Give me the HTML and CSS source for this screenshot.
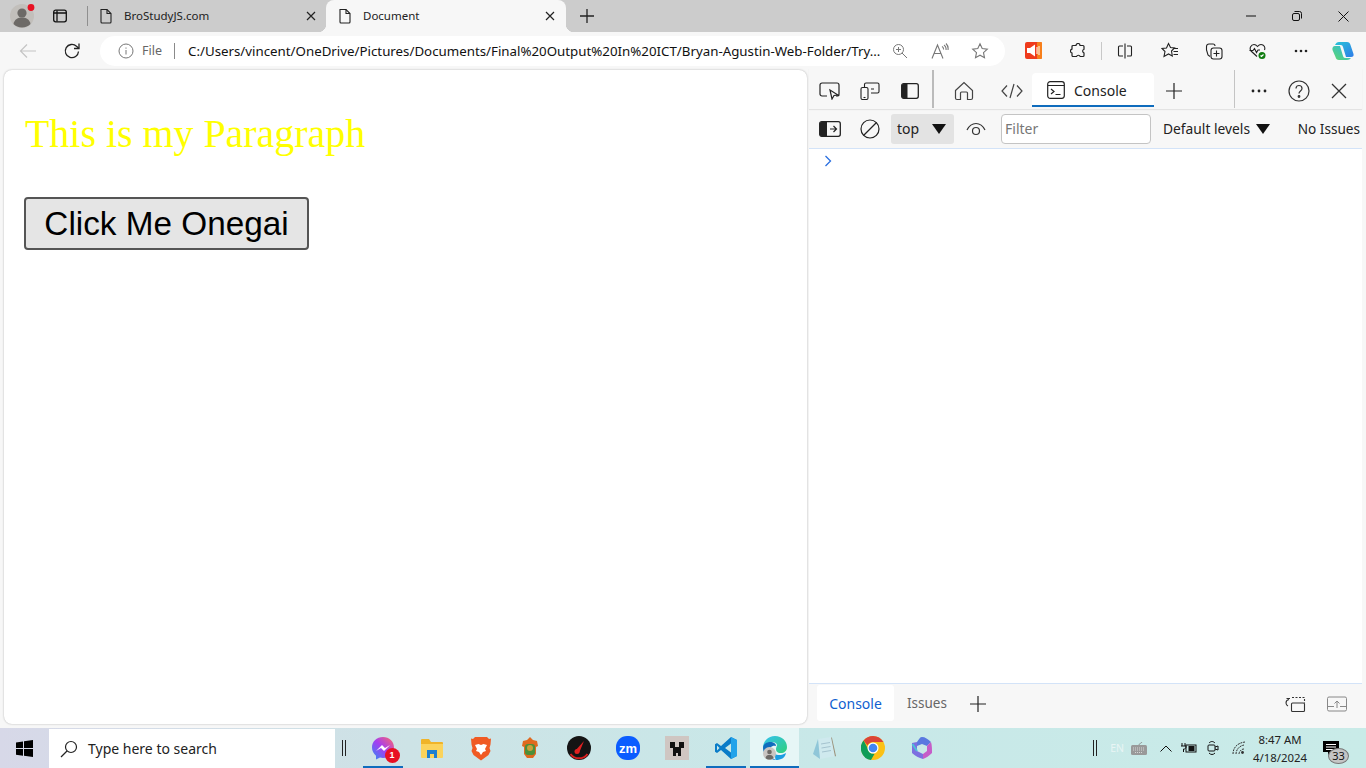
FILE: index.html
```html
<!DOCTYPE html>
<html lang="en">
<head>
    <meta charset="UTF-8">
    <title>Document</title>
    <link rel="stylesheet" href="styles.css">
</head>
<body>
    <!-- browser title bar -->
    <div class="titlebar">
        <div class="avatar-box">
            <svg width="28" height="28" viewBox="0 0 28 28"><circle cx="14" cy="14" r="12" fill="#c2bfbb"/><circle cx="14" cy="11" r="4.600" fill="#6d6a67"/><path d="M5.500 22c1-5 4.500-6.500 8.500-6.500s7.500 1.500 8.500 6.500c-2 2.300-5 3.500-8.500 3.500s-6.500-1.200-8.500-3.500z" fill="#6d6a67"/><circle cx="23" cy="5.500" r="3.400" fill="#e81123"/></svg>
        </div>
        <div class="tab-actions">
            <svg width="16" height="16" viewBox="0 0 16 16" fill="none" stroke="#111" stroke-width="1.300"><rect x="1.700" y="2.200" width="12.600" height="11.600" rx="2"/><path d="M5 2.500v11M1.700 5h12.600" /></svg>
        </div>
        <div class="tab-sep"></div>
        <div class="tab">
            <svg class="page-ico" width="14" height="16" viewBox="0 0 14 16" fill="none" stroke="#222" stroke-width="1.100"><path d="M2 1.500h6l4 4v8.500a1 1 0 0 1-1 1H3a1 1 0 0 1-1-1v-11.500a1 1 0 0 1 0-1z"/><path d="M8 1.500v4h4"/></svg>
            <span class="tab-title">BroStudyJS.com</span>
            <svg class="tab-close" width="10" height="10" viewBox="0 0 10 10" stroke="#222" stroke-width="1.200"><path d="M1 1l8 8M9 1l-8 8"/></svg>
        </div>
        <div class="tab tab-active">
            <svg class="page-ico" width="14" height="16" viewBox="0 0 14 16" fill="none" stroke="#222" stroke-width="1.100"><path d="M2 1.500h6l4 4v8.500a1 1 0 0 1-1 1H3a1 1 0 0 1-1-1v-11.500a1 1 0 0 1 0-1z"/><path d="M8 1.500v4h4"/></svg>
            <span class="tab-title">Document</span>
            <svg class="tab-close" width="10" height="10" viewBox="0 0 10 10" stroke="#222" stroke-width="1.200"><path d="M1 1l8 8M9 1l-8 8"/></svg>
        </div>
        <div class="new-tab">
            <svg width="16" height="16" viewBox="0 0 16 16" stroke="#222" stroke-width="1.300"><path d="M8 1v14M1 8h14"/></svg>
        </div>
        <div class="window-btns">
            <div class="win-btn"><svg width="10" height="2" viewBox="0 0 10 2" stroke="#111"><path d="M0 1h10"/></svg></div>
            <div class="win-btn"><svg width="10" height="10" viewBox="0 0 10 10" fill="none" stroke="#111"><rect x=".5" y="2.500" width="7" height="7" rx="1.500"/><path d="M2.500 .5h5a2 2 0 0 1 2 2v5"/></svg></div>
            <div class="win-btn"><svg width="11" height="11" viewBox="0 0 11 11" stroke="#111"><path d="M.5 .5l10 10M10.500 .5l-10 10"/></svg></div>
        </div>
    </div>

    <!-- address bar row -->
    <div class="toolbar">
        <div class="tool-btn nav-btn">
            <svg width="18" height="16" viewBox="0 0 18 16" fill="none" stroke="#c4c4c4" stroke-width="1.200"><path d="M17 8H1.500M8 1.500L1.500 8 8 14.500"/></svg>
        </div>
        <div class="tool-btn nav-btn">
            <svg width="18" height="18" viewBox="0 0 18 18" fill="none" stroke="#222" stroke-width="1.300"><path d="M15.500 9.500a6.600 6.600 0 1 1-2-5.200L16 6.500"/><path d="M16 1.500v5h-5"/></svg>
        </div>
        <div class="address-bar">
            <svg class="info-ico" width="16" height="16" viewBox="0 0 16 16" fill="none" stroke="#777" stroke-width="1"><circle cx="8" cy="8" r="7"/><path d="M8 7v4.500M8 4.500v1.200"/></svg>
            <span class="file-label">File</span>
            <span class="addr-sep"></span>
            <span class="url">C:/Users/vincent/OneDrive/Pictures/Documents/Final%20Output%20In%20ICT/Bryan-Agustin-Web-Folder/Try...</span>
            <div class="addr-icons">
                <svg width="16" height="16" viewBox="0 0 16 16" fill="none" stroke="#777" stroke-width="1"><circle cx="6.500" cy="6.500" r="5"/><path d="M10 10l5 5M4 6.500h5M6.500 4v5"/></svg>
                <svg width="18" height="16" viewBox="0 0 18 16" fill="none" stroke="#777" stroke-width="1.100"><path d="M1 15.500L6.500 2l5.500 13.500M3 10.500h7"/><path d="M11 3.500a3 3 0 0 1 1.500 3M13 2a5 5 0 0 1 2 5M15 .5a7.500 7.500 0 0 1 2 6.500"/></svg>
                <svg width="18" height="18" viewBox="0 0 18 18" fill="none" stroke="#777" stroke-width="1.100"><path d="M9 1.800l2.200 4.700 5.100.6-3.800 3.500 1 5.100L9 13.200l-4.500 2.500 1-5.100-3.800-3.500 5.100-.6z"/></svg>
            </div>
        </div>
        <div class="tool-btn red-btn">
            <svg width="17" height="17" viewBox="0 0 17 17"><rect width="17" height="17" rx="2" fill="#ef3b1d"/><rect x="12" width="5" height="17" rx="1" fill="#f77f1b"/><path d="M2 6h3l5-3.500v12L5 11H2z" fill="#fff"/><path d="M12 5v7M14 4v9" stroke="#fff" stroke-width="1"/></svg>
        </div>
        <div class="tool-btn ext-btn">
            <svg width="16" height="16" viewBox="0 0 16 16" fill="none" stroke="#222" stroke-width="1.200"><path d="M6 2.500a2 2 0 0 1 4 0h3a1 1 0 0 1 1 1v2.700a2 2 0 0 0 0 3.800v2.500a1 1 0 0 1-1 1h-2.800a2 2 0 0 0-3.700 0H3a1 1 0 0 1-1-1V10a2 2 0 0 1 0-3.900V3.500a1 1 0 0 1 1-1z"/></svg>
        </div>
        <div class="tool-sep"></div>
        <div class="tool-btn split-btn">
            <svg width="16" height="16" viewBox="0 0 16 16" fill="none" stroke="#222" stroke-width="1.100"><path d="M6 3H2.500a1 1 0 0 0-1 1v8a1 1 0 0 0 1 1H6M10 3h3.500a1 1 0 0 1 1 1v8a1 1 0 0 1-1 1H10M8 .5v15"/></svg>
        </div>
        <div class="tool-btn">
            <svg width="18" height="17" viewBox="0 0 18 17" fill="none" stroke="#222" stroke-width="1.100"><path d="M7.500 1.500l2 4 4 .5-3 3 .8 5-3.800-2-4.500 2.500 1-5-3-3 4.500-.5z"/><path d="M12.500 6.500H17M12.500 9.500H17M12.500 12.500H17"/></svg>
        </div>
        <div class="tool-btn">
            <svg width="18" height="18" viewBox="0 0 18 18" fill="none" stroke="#222" stroke-width="1.100"><path d="M5 14.500l-2-1.500-1.500-5V4.500A2.500 2.500 0 0 1 4 2h4a2 2 0 0 1 2 2"/><rect x="6" y="6" width="11" height="11" rx="2.500"/><path d="M11.500 8.500v6M8.500 11.500h6"/></svg>
        </div>
        <div class="tool-btn">
            <svg width="18" height="18" viewBox="0 0 18 18" fill="none" stroke="#222" stroke-width="1.100"><path d="M8 14.500L2 9C0 6.500 2 2.500 5 2.500c1.500 0 2.500.8 3.500 2 1-1.200 2-2 3.500-2 3 0 4.500 3 3.500 5.500"/><path d="M.5 8.500H4l1.500-2 2 4L9 8h2"/><circle cx="13" cy="13.500" r="3.500" fill="#107c10" stroke="none"/><path d="M11.500 13.500l1 1 2-2" stroke="#fff"/></svg>
        </div>
        <div class="tool-btn dots">
            <svg width="14" height="4" viewBox="0 0 14 4" fill="#222"><circle cx="2" cy="2" r="1.300"/><circle cx="7" cy="2" r="1.300"/><circle cx="12" cy="2" r="1.300"/></svg>
        </div>
        <div class="tool-btn copilot">
            <svg width="24" height="24" viewBox="0 0 24 24"><defs><linearGradient id="cpA" x1="0" y1="0" x2="1" y2="1"><stop offset="0" stop-color="#27c4d8"/><stop offset="1" stop-color="#2f7ce8"/></linearGradient><linearGradient id="cpB" x1="0" y1="1" x2="1" y2="0"><stop offset="0" stop-color="#5fd86a"/><stop offset="1" stop-color="#29b6e8"/></linearGradient></defs><path d="M8 3h8c2 0 3 1 3.500 3l3 9c.5 2-.5 3-2.500 3h-5l-3-10c-.5-2-2-2-3-2H4C5 4 6 3 8 3z" fill="url(#cpA)"/><path d="M16 21H8c-2 0-3-1-3.500-3l-3-7c-.5-2 .5-4 2.500-4h5l3 10c.5 2 2 2 3 2h5c-1 1-2 2-4 2z" fill="url(#cpB)"/></svg>
        </div>
    </div>

    <div class="main">
        <!-- the rendered page -->
        <div class="page">
            <p class="para">This is my Paragraph</p>
            <button class="page-btn">Click Me Onegai</button>
        </div>

        <!-- devtools panel -->
        <div class="devtools">
            <div class="dt-tabs">
                <div class="dt-btn">
                    <svg width="22" height="18" viewBox="0 0 22 18" fill="none" stroke="#222" stroke-width="1.200"><path d="M8 14H3a2 2 0 0 1-2-2V3a2 2 0 0 1 2-2h15a2 2 0 0 1 2 2v9a2 2 0 0 1-2 2h-1"/><path d="M11 8l2 9 2-3.500 4-.5z"/></svg>
                </div>
                <div class="dt-btn">
                    <svg width="20" height="18" viewBox="0 0 20 18" fill="none" stroke="#222" stroke-width="1.100"><path d="M4.500 5V2.500a1.500 1.500 0 0 1 1.500-1.500h11.500a1.500 1.500 0 0 1 1.500 1.500v7a1.500 1.500 0 0 1-1.500 1.500H11M11 7h3"/><rect x="1" y="5.500" width="7" height="12" rx="1.500"/><path d="M3.500 15.500h2"/></svg>
                </div>
                <div class="dt-btn">
                    <svg width="18" height="16" viewBox="0 0 18 16"><rect x=".7" y=".7" width="16.600" height="14.600" rx="2" fill="none" stroke="#222" stroke-width="1.300"/><path d="M2.500 1h4v14h-4a2 2 0 0 1-2-2V3a2 2 0 0 1 2-2z" fill="#222"/></svg>
                </div>
                <div class="dt-sep first-sep"></div>
                <div class="dt-btn home-btn">
                    <svg width="20" height="20" viewBox="0 0 20 20" fill="none" stroke="#444" stroke-width="1.200"><path d="M1.500 9.500L10 1.500l8.500 8V17a1.500 1.500 0 0 1-1.500 1.500h-3.500V12a1 1 0 0 0-1-1h-5a1 1 0 0 0-1 1v6.500H3A1.500 1.500 0 0 1 1.500 17z"/></svg>
                </div>
                <div class="dt-btn code-btn">
                    <svg width="22" height="16" viewBox="0 0 22 16" fill="none" stroke="#444" stroke-width="1.200"><path d="M6 2.500L1 8l5 5.500M16 2.500L21 8l-5 5.500M13 1L9 15"/></svg>
                </div>
                <div class="console-tab">
                    <svg width="18" height="18" viewBox="0 0 18 18" fill="none" stroke="#222" stroke-width="1.200"><rect x=".7" y=".7" width="16.600" height="16.600" rx="2.500"/><path d="M1 4.500h16M4 8l3 2.500L4 13M8.500 13.500h5"/></svg>
                    <span>Console</span>
                </div>
                <div class="dt-btn plus-btn">
                    <svg width="18" height="18" viewBox="0 0 18 18" stroke="#222" stroke-width="1.200"><path d="M9 1v16M1 9h16"/></svg>
                </div>
                <div class="dt-sep second-sep"></div>
                <div class="dt-btn more-btn">
                    <svg width="16" height="4" viewBox="0 0 16 4" fill="#222"><circle cx="2" cy="2" r="1.400"/><circle cx="8" cy="2" r="1.400"/><circle cx="14" cy="2" r="1.400"/></svg>
                </div>
                <div class="dt-btn">
                    <svg width="22" height="22" viewBox="0 0 22 22" fill="none" stroke="#333" stroke-width="1.200"><circle cx="11" cy="11" r="10"/><path d="M8 8.500C8 6.500 9.500 5.500 11 5.500s3 1 3 3c0 2.500-3 2.500-3 5"/><circle cx="11" cy="16.500" r=".8" fill="#333"/></svg>
                </div>
                <div class="dt-btn">
                    <svg width="16" height="16" viewBox="0 0 16 16" stroke="#333" stroke-width="1.300"><path d="M1 1l14 14M15 1L1 15"/></svg>
                </div>
            </div>

            <div class="console-bar">
                <div class="dt-btn">
                    <svg width="22" height="16" viewBox="0 0 22 16"><rect x=".7" y=".7" width="20.600" height="14.600" rx="2" fill="none" stroke="#222" stroke-width="1.300"/><path d="M2.500 1H8v14H2.500a2 2 0 0 1-2-2V3a2 2 0 0 1 2-2z" fill="#222"/><path d="M11 8h6M14.500 5l3 3-3 3" fill="none" stroke="#222" stroke-width="1.200"/></svg>
                </div>
                <div class="dt-btn">
                    <svg width="20" height="20" viewBox="0 0 20 20" fill="none" stroke="#222" stroke-width="1.200"><circle cx="10" cy="10" r="9"/><path d="M3.500 16.500l13-13"/></svg>
                </div>
                <div class="context-select">
                    <span>top</span>
                    <svg width="14" height="10" viewBox="0 0 14 10" fill="#111"><path d="M0 0h14L7 10z"/></svg>
                </div>
                <div class="dt-btn eye-btn">
                    <svg width="20" height="14" viewBox="0 0 20 14" fill="none" stroke="#333" stroke-width="1.200"><path d="M1 8c2-4 5.500-6.500 9-6.500S17 4 19 8"/><circle cx="10" cy="9" r="3.500"/></svg>
                </div>
                <div class="filter-box">Filter</div>
                <div class="levels">
                    <span>Default levels</span>
                    <svg width="14" height="10" viewBox="0 0 14 10" fill="#111"><path d="M0 0h14L7 10z"/></svg>
                </div>
                <div class="no-issues">No Issues</div>
            </div>

            <div class="console-area">
                <svg width="8" height="12" viewBox="0 0 8 12" fill="none" stroke="#2a6fe0" stroke-width="1.300"><path d="M1.500 1l5 5-5 5"/></svg>
            </div>

            <div class="drawer">
                <div class="drawer-tab drawer-tab-on">Console</div>
                <div class="drawer-tab">Issues</div>
                <div class="dt-btn drawer-plus">
                    <svg width="18" height="18" viewBox="0 0 18 18" stroke="#222" stroke-width="1.200"><path d="M9 1v16M1 9h16"/></svg>
                </div>
                <div class="drawer-right">
                    <svg width="22" height="18" viewBox="0 0 22 18" fill="none" stroke="#333" stroke-width="1.100"><path d="M5 4.500a3.500 3.500 0 0 0-3 3.500 3.500 3.500 0 0 0 2 3M2.500 3.500h3.500"/><rect x="7.500" y="8" width="13" height="8.500" rx="1"/><path d="M8 2.500h12.500V8" stroke-dasharray="2 1.500"/></svg>
                    <svg width="20" height="16" viewBox="0 0 20 16" fill="none" stroke="#888" stroke-width="1"><rect x=".5" y="1" width="19" height="14" rx="1.500"/><path d="M.5 10.500H7M13 10.500h6.500M10 12V5M7.500 7.500L10 5l2.500 2.500"/></svg>
                </div>
            </div>
        </div>
    </div>

    <!-- windows taskbar -->
    <div class="taskbar">
        <div class="start">
            <svg width="17" height="17" viewBox="0 0 17 17" fill="#000"><path d="M0 2.400l7-1v6.700H0zM8 1.300L17 0v8.100H8zM0 9h7v6.700l-7-1zM8 9h9v8l-9-1.300z"/></svg>
        </div>
        <div class="search">
            <svg width="18" height="18" viewBox="0 0 18 18" fill="none" stroke="#222" stroke-width="1.200"><circle cx="11" cy="7" r="5.500"/><path d="M7 11l-6 6"/></svg>
            <span>Type here to search</span>
        </div>
        <div class="bars"></div>
        <div class="apps">
            <div class="app app-open">
                <span class="app-icon-wrap">
                    <svg width="24" height="24" viewBox="0 0 24 24"><defs><linearGradient id="msg" x1="0" y1="1" x2="1" y2="0"><stop offset="0" stop-color="#2e8cf5"/><stop offset=".5" stop-color="#a63df0"/><stop offset="1" stop-color="#ff6a68"/></linearGradient></defs><path d="M12 1c6.300 0 11 4.500 11 10.500S18.300 22 12 22c-1 0-2-.1-3-.4L5 23.500v-3.800C2.600 17.700 1 14.800 1 11.500 1 5.500 5.700 1 12 1z" fill="url(#msg)"/><path d="M5 15l6-6 3 3 5-3-6 6-3-3z" fill="#fff"/></svg>
                    <span class="app-badge">1</span>
                </span>
            </div>
            <div class="app">
                <svg width="24" height="24" viewBox="0 0 24 24"><path d="M1 4a1 1 0 0 1 1-1h7l2 3h11a1 1 0 0 1 1 1v2H1z" fill="#f0b429"/><path d="M1 8h22v13a1 1 0 0 1-1 1H2a1 1 0 0 1-1-1z" fill="#fbd35c"/><path d="M7 22v-8h10v8h-3v-4h-4v4z" fill="#1d7fd0"/></svg>
            </div>
            <div class="app">
                <svg width="22" height="25" viewBox="0 0 22 25"><path d="M5 1h12l2 2 2-.5-.5 6-1 3.500 1 3-2 4-7.500 5.500L3.500 19l-2-4 1-3-1-3.500L1 2.500 3 3z" fill="#f05a23"/><path d="M5 9l3.500-1 2.500 1 2.500-1L17 9l-2 4 1 2-3 1-2 3-2-3-3-1 1-2z" fill="#fff"/></svg>
            </div>
            <div class="app">
                <svg width="20" height="24" viewBox="0 0 20 24"><path d="M3 5l4-1 3-3 3 3 4 1 1 5-2 1v7l-3 4H7l-3-4v-7L2 10z" fill="#e0691f"/><rect x="5" y="8" width="10" height="11" rx="3" fill="#4c8f3a"/><circle cx="10" cy="12" r="3" fill="#c9a13a"/></svg>
            </div>
            <div class="app">
                <svg width="24" height="24" viewBox="0 0 24 24"><circle cx="12" cy="12" r="12" fill="#141414"/><path d="M3.500 18a10.500 10.500 0 0 0 17 0" fill="none" stroke="#d81e1e" stroke-width="2"/><path d="M8 15l9-10-5 12z" fill="#e02020"/><circle cx="10" cy="15.500" r="2.500" fill="#e02020"/></svg>
            </div>
            <div class="app">
                <svg width="24" height="24" viewBox="0 0 24 24"><rect width="24" height="24" rx="11" fill="#0b5cff"/><text x="12" y="16.500" class="zoom-txt" text-anchor="middle">zm</text></svg>
            </div>
            <div class="app">
                <svg width="24" height="24" viewBox="0 0 24 24"><rect width="24" height="24" fill="#cfc6c2"/><path d="M5 6h5v5h4V6h5v6h-3v8h-3v-3h-2v3H8v-8H5z" fill="#111"/></svg>
            </div>
            <div class="app app-open">
                <svg width="24" height="24" viewBox="0 0 24 24"><path d="M17 1l6 3v16l-6 3L7 14l-4 3-2-1.200V8.200L3 7l4 3z" fill="#0a7cc8"/><path d="M17 1l6 3v16l-6 3z" fill="#22a3ea"/><path d="M17 7.500L11 12l6 4.500z" fill="#c9e9e9"/><path d="M3 9.500L5.500 12 3 14.500z" fill="#c9e9e9"/></svg>
            </div>
            <div class="app app-open app-current">
                <span class="app-icon-wrap">
                    <svg width="24" height="24" viewBox="0 0 24 24"><defs><linearGradient id="edgeA" x1="0" y1="0" x2="1" y2="1"><stop offset="0" stop-color="#35c1f1"/><stop offset="1" stop-color="#2fd07a"/></linearGradient></defs><path d="M12 0c7 0 12 5 12 11 0 4-3 6-6 6-4 0-5-2-5-4 0-2 1-3 1-4 0-2-3-3-5-3C5 6 1 9 0 12 0 5 5 0 12 0z" fill="url(#edgeA)"/><path d="M0 12c0-4 4-6 7-6 4 0 6 2 6 4-4-1-7 2-7 6 0 3 3 7 8 8-8 0-14-5-14-12z" fill="#0f6cbd"/><path d="M13 24c5 0 9-2 10-7-3 2-8 3-11 1 0 3 0 5 1 6z" fill="#1b9de2"/></svg>
                    <svg class="edge-person" width="13" height="13" viewBox="0 0 13 13"><circle cx="6.500" cy="6.500" r="6.500" fill="#c9c5c2"/><circle cx="6.500" cy="5" r="2.300" fill="#6d6a67"/><path d="M2.500 11c.6-2.500 2-3 4-3s3.400.5 4 3c-1 1-2.500 1.500-4 1.500s-3-.5-4-1.500z" fill="#6d6a67"/></svg>
                </span>
            </div>
            <div class="app">
                <svg width="24" height="24" viewBox="0 0 24 24"><path d="M6 3l13-2 4 19-15 3z" fill="#cfe9ee"/><path d="M19 1l1 1 4 18-1 .5z" fill="#9a8f78"/><path d="M1 18L6 3l2 20z" fill="#8fc6d8"/><path d="M9 8l9-1.500M9.500 12l9-1.500M10 16l9-1.500" stroke="#8ab" stroke-width=".6"/></svg>
            </div>
            <div class="app">
                <svg width="24" height="24" viewBox="0 0 24 24"><circle cx="12" cy="12" r="12" fill="#fbc116"/><path d="M12 0a12 12 0 0 1 10.400 6H12a6 6 0 0 0-5.500 3.500L2.600 4.500A12 12 0 0 1 12 0z" fill="#db4437"/><path d="M2.600 4.500l4 7.500a6 6 0 0 0 7 5.700L10 24A12 12 0 0 1 2.600 4.500z" fill="#0f9d58"/><circle cx="12" cy="12" r="5.500" fill="#fff"/><circle cx="12" cy="12" r="4.300" fill="#4285f4"/></svg>
            </div>
            <div class="app">
                <svg width="22" height="24" viewBox="0 0 22 24"><path d="M11 1c3 0 6 2 9 5l-4 4-5-2-5 2V6c2-3 3-5 5-5z" fill="#5a78e0"/><path d="M20 6c1 3 1 8 1 11-3 3-6 5-9 6v-5l4-3v-5z" fill="#c65cc8"/><path d="M1 7l5-1v9l6 3v5c-4-1-8-3-11-6z" fill="#7d6fe0"/><path d="M1.500 8l4.500 7" stroke="#4cc0d8" stroke-width="2"/></svg>
            </div>
        </div>
        <div class="tray">
            <div class="bars tray-bars"></div>
            <span class="lang">EN</span>
            <svg class="tray-kbd" width="16" height="14" viewBox="0 0 16 14"><path d="M8 4c0-2 2-1 3-3" fill="none" stroke="#888" stroke-width=".8"/><rect y="4" width="16" height="10" rx="1.500" fill="#999"/><path d="M2 7h12M2 9h12M4 11.500h8" stroke="#ddd" stroke-width=".9" stroke-dasharray="1 1"/></svg>
            <svg class="tray-caret" width="12" height="7" viewBox="0 0 12 7" fill="none" stroke="#111" stroke-width="1"><path d="M.5 6.500L6 1l5.500 5.500"/></svg>
            <svg class="tray-batt" width="16" height="12" viewBox="0 0 16 12" fill="none" stroke="#111" stroke-width="1"><path d="M1 1v3M4 1v3M0 4h5v1a2 2 0 0 1-2.500 2v3"/><rect x="5" y="3" width="10" height="7"/><rect x="8" y="4.500" width="5" height="4" fill="#111"/></svg>
            <svg class="tray-meet" width="12" height="16" viewBox="0 0 12 16" fill="none" stroke="#111" stroke-width="1"><path d="M2 3c2-2 4-2 6 0M2 13c2 2 4 2 6 0"/><rect x="1" y="5" width="7" height="6" rx="1"/><path d="M8 7l3-1v4l-3-1"/></svg>
            <svg class="tray-wifi" width="14" height="14" viewBox="0 0 14 14" fill="none" stroke="#333" stroke-width="1"><path d="M1 13C1 7 5 2 13 1M4 13c0-4 3-8 8-9M7 13c0-2 2-5 5-5" stroke-dasharray="2 .8"/><circle cx="10.500" cy="11.500" r="1.400" fill="#333" stroke="none"/></svg>
            <div class="clock">
                <span>8:47 AM</span>
                <span>4/18/2024</span>
            </div>
            <div class="notify">
                <svg width="16" height="14" viewBox="0 0 16 14"><path d="M0 0h16v11H8l-3 3v-3H0z" fill="#000"/><path d="M3 3.500h10M3 6h10M3 8.500h7" stroke="#fff"/></svg>
                <span class="notify-count">33</span>
            </div>
        </div>
    </div>
</body>
</html>
```

FILE: styles.css
```css
* {
    box-sizing: border-box;
}

html, body {
    margin: 0;
    height: 100%;
    overflow: hidden;
}

body {
    width: 1366px;
    height: 768px;
    display: flex;
    flex-direction: column;
    font-family: 'Noto Sans', 'Open Sans', sans-serif;
    background-color: #f7f7f7;
    color: #222;
}

svg {
    display: block;
    flex-shrink: 0;
}

/* title bar */
.titlebar {
    height: 32px;
    background-color: #cccccc;
    display: flex;
    align-items: stretch;
    flex-shrink: 0;
}

.avatar-box {
    width: 44px;
    display: flex;
    align-items: center;
    justify-content: center;
}

.tab-actions {
    width: 32px;
    display: flex;
    align-items: center;
    justify-content: center;
}

.tab-sep {
    width: 1px;
    height: 20px;
    margin: 6px 0 0 11px;
    background-color: #8f8f8f;
}

.tab {
    width: 238px;
    display: flex;
    align-items: center;
    padding: 0 10px 0 11px;
    font-size: 11.5px;
}

.tab-active {
    position: relative;
    width: 240px;
    padding-left: 12px;
    padding-right: 11px;
    background-color: #f7f7f7;
    border-radius: 8px 8px 0 0;
}

.tab-active::before {
    content: "";
    position: absolute;
    left: -8px;
    bottom: 0;
    width: 8px;
    height: 8px;
    background: radial-gradient(circle at 0 0, transparent 8px, #f7f7f7 8.5px);
}

.tab-active::after {
    content: "";
    position: absolute;
    right: -8px;
    bottom: 0;
    width: 8px;
    height: 8px;
    background: radial-gradient(circle at 100% 0, transparent 8px, #f7f7f7 8.5px);
}

.page-ico {
    margin-right: 11px;
}

.tab-title {
    flex: 1;
    margin-bottom: 2px;
}

.new-tab {
    width: 42px;
    display: flex;
    align-items: center;
    justify-content: center;
}

.window-btns {
    margin-left: auto;
    display: flex;
}

.win-btn {
    width: 46px;
    display: flex;
    align-items: center;
    justify-content: center;
}

/* address row */
.toolbar {
    height: 36px;
    padding-top: 1px;
    display: flex;
    align-items: center;
    background-color: #f7f7f7;
    flex-shrink: 0;
}

.tool-btn {
    width: 44px;
    height: 30px;
    display: flex;
    align-items: center;
    justify-content: center;
}

.nav-btn:first-child {
    margin-left: 6px;
}

.address-bar {
    width: 905px;
    height: 30px;
    margin-left: 6px;
    padding-left: 18px;
    display: flex;
    align-items: center;
    background-color: #fff;
    border-radius: 15px;
    font-size: 13.3px;
}

.file-label {
    margin-left: 8px;
    color: #666;
    font-size: 12.5px;
}

.addr-sep {
    width: 1px;
    height: 16px;
    margin: 0 13px 0 12px;
    background-color: #8a8a8a;
}

.url {
    color: #111;
    white-space: nowrap;
}

.addr-icons {
    margin-left: auto;
    width: 113px;
    padding-right: 16px;
    display: flex;
    align-items: center;
    justify-content: space-between;
}

.red-btn {
    margin-left: 6px;
}

.ext-btn {
    width: 46px;
}

.tool-sep {
    width: 1px;
    height: 18px;
    background-color: #c8c8c8;
}

.split-btn {
    width: 46px;
}

.dots {
    width: 42px;
}

.copilot {
    margin-left: -1px;
}

/* main split */
.main {
    flex: 1;
    min-height: 0;
    display: flex;
    padding-left: 4px;
    padding-right: 4px;
}

.page {
    width: 803px;
    height: 654px;
    margin-top: 2px;
    padding: 20px;
    background-color: #fff;
    border-radius: 8px;
    box-shadow: 0 0 2px rgba(0, 0, 0, 0.3);
}

.para {
    margin: 21px 0 40px 1px;
    font-family: 'Liberation Serif', serif;
    font-size: 39.9px;
    line-height: 46px;
    color: #ffff00;
}

.page-btn {
    display: block;
    width: 285px;
    height: 53px;
    padding: 0;
    font-family: 'Liberation Sans', sans-serif;
    font-size: 33.3px;
    color: #000;
    background-color: #e5e5e5;
    border: 2px solid #555;
    border-radius: 4px;
}

/* devtools */
.devtools {
    width: 553px;
    margin-left: 2px;
    display: flex;
    flex-direction: column;
    font-size: 13.5px;
}

.dt-tabs {
    height: 41px;
    flex-shrink: 0;
    display: flex;
    align-items: center;
    box-shadow: 0 1px 1px rgba(0, 0, 0, 0.08);
    position: relative;
}

.dt-btn {
    width: 40px;
    height: 30px;
    flex-shrink: 0;
    display: flex;
    align-items: center;
    justify-content: center;
}

.dt-tabs > .dt-btn {
    margin-top: 4px;
}

.dt-tabs > .dt-btn:first-child {
    margin-left: 1px;
}

.dt-sep {
    width: 1px;
    height: 38px;
    background-color: #c4c4c4;
    flex-shrink: 0;
}

.first-sep {
    margin-left: 2px;
    background-color: #bbb;
    width: 2px;
}

.home-btn {
    margin-left: 10px;
}

.code-btn {
    margin-left: 8px;
}

.console-tab {
    width: 122px;
    height: 34px;
    align-self: flex-start;
    margin-top: 5px;
    padding: 2px 0 0 15px;
    display: flex;
    align-items: center;
    gap: 9px;
    background-color: #fff;
    border-bottom: 2px solid #0f6cbd;
    border-radius: 4px 4px 0 0;
    font-size: 14px;
}

.second-sep {
    margin-left: 40px;
}

.more-btn {
    margin-left: 4px;
}

.console-bar {
    height: 40px;
    flex-shrink: 0;
    display: flex;
    align-items: center;
    border-bottom: 1px solid #d3e3f8;
    white-space: nowrap;
}

.console-bar > .dt-btn:first-child {
    margin-left: 1px;
}

.context-select {
    width: 63px;
    height: 30px;
    margin-left: 1px;
    padding: 0 8px 0 6px;
    display: flex;
    align-items: center;
    justify-content: space-between;
    background-color: #e3e3e3;
    border-radius: 3px;
    font-size: 14px;
}

.eye-btn {
    margin: 0 5px 0 2px;
}

.filter-box {
    width: 150px;
    height: 30px;
    padding-left: 3px;
    display: flex;
    align-items: center;
    background-color: #fff;
    border: 1px solid #c4c4c4;
    border-radius: 4px;
    color: #777;
    font-size: 14px;
}

.levels {
    margin-left: 12px;
    display: flex;
    align-items: center;
    gap: 6px;
    font-size: 13.8px;
}

.no-issues {
    margin-left: auto;
    padding-right: 2px;
    font-size: 13.6px;
}

.console-area {
    flex: 1;
    padding: 6px 0 0 15px;
    background-color: #fff;
    border-bottom: 1px solid #d3e3f8;
}

.drawer {
    height: 44px;
    flex-shrink: 0;
    display: flex;
    align-items: center;
    padding-left: 8px;
    padding-bottom: 6px;
}

.drawer-tab {
    height: 36px;
    padding: 0 13px;
    display: flex;
    align-items: center;
    color: #666;
    font-size: 13.5px;
}

.drawer-tab-on {
    width: 77px;
    justify-content: center;
    padding: 0;
    background-color: #fff;
    border-radius: 3px;
    color: #0f5fd0;
    font-size: 14px;
}

.drawer-plus {
    margin: 2px 0 0 -2px;
}

.drawer-right {
    margin-left: auto;
    padding: 2px 15px 0 0;
    display: flex;
    align-items: center;
    gap: 21px;
}

/* taskbar */
.taskbar {
    height: 40px;
    flex-shrink: 0;
    display: flex;
    align-items: stretch;
    background: linear-gradient(90deg, #d7d8e8 0%, #cde3e6 30%, #c8e8e8 60%, #c9ebe8 100%);
}

.start {
    width: 49px;
    display: flex;
    align-items: center;
    justify-content: center;
}

.search {
    width: 286px;
    margin-top: 1px;
    padding-left: 11px;
    display: flex;
    align-items: center;
    gap: 10px;
    background-color: #fff;
    font-size: 14px;
    color: #222;
}

.bars {
    width: 4px;
    height: 16px;
    margin: 12px 0 0 7px;
    border-left: 1px solid #222;
    border-right: 1px solid #222;
}

.apps {
    margin-left: 12px;
    display: flex;
}

.app {
    width: 49px;
    display: flex;
    align-items: center;
    justify-content: center;
    position: relative;
}

.app-open::after {
    content: "";
    position: absolute;
    left: 5px;
    right: 4px;
    bottom: 0;
    height: 2px;
    background-color: #0f6cbd;
}

.app-current {
    background-color: #e6f6f6;
}

.app-current::after {
    left: 0;
    right: 0;
}

.app-icon-wrap {
    position: relative;
    display: block;
}

.app-badge {
    position: absolute;
    right: -5px;
    bottom: -3px;
    width: 15px;
    height: 15px;
    border-radius: 50%;
    background-color: #e81123;
    color: #fff;
    font-family: 'Liberation Sans', sans-serif;
    font-size: 9px;
    font-weight: bold;
    line-height: 15px;
    text-align: center;
}

.edge-person {
    position: absolute;
    left: 0;
    bottom: 0;
}

.zoom-txt {
    font-family: 'Liberation Sans', sans-serif;
    font-size: 13px;
    font-weight: bold;
    fill: #fff;
}

.tray {
    margin-left: auto;
    display: flex;
    align-items: center;
}

.tray-bars {
    margin: 0;
}

.lang {
    margin-left: 13px;
    font-size: 10.5px;
    color: #e9f5f5;
}

.tray-kbd {
    margin-left: 7px;
}

.tray-caret {
    margin-left: 13px;
}

.tray-batt {
    margin-left: 9px;
}

.tray-meet {
    margin-left: 10px;
}

.tray-wifi {
    margin-left: 13px;
}

.clock {
    width: 80px;
    margin-left: -6px;
    display: flex;
    flex-direction: column;
    align-items: center;
    gap: 3px;
    font-size: 11.4px;
    line-height: 15px;
    color: #222;
}

.notify {
    position: relative;
    width: 20px;
    margin-left: 3px;
    margin-right: 23px;
}

.notify-count {
    position: absolute;
    left: 5px;
    top: 7px;
    width: 21px;
    height: 16px;
    border: 1px solid #777;
    border-radius: 50%;
    background-color: #c5c5c5;
    color: #111;
    font-size: 11px;
    line-height: 14px;
    text-align: center;
}
```
